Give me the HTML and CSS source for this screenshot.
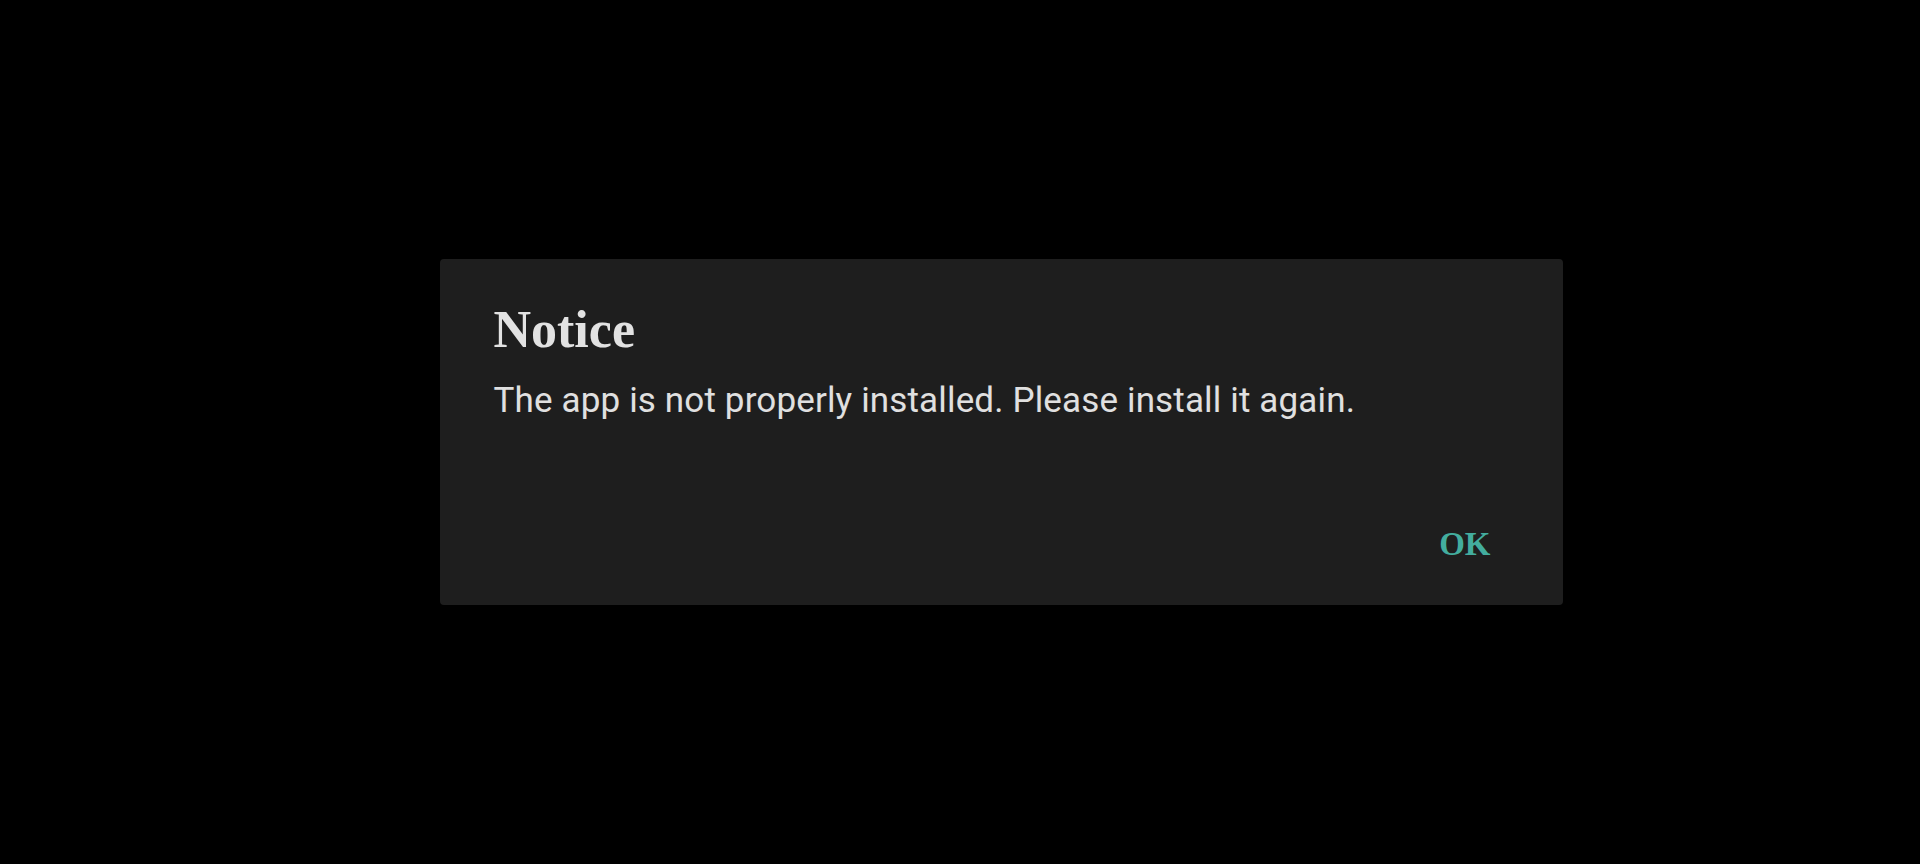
FILE: index.html
```html
<!DOCTYPE html>
<html>
<head>
<meta charset="utf-8">
<link rel="stylesheet" href="styles.css">
</head>
<body>
<div class="screen">
  <div class="dialog">
    <h1 class="title">Notice</h1>
    <p class="message">The app is not properly installed. Please install it again.</p>
    <div class="actions">
      <span class="btn">OK</span>
    </div>
  </div>
</div>
</body>
</html>
```
FILE: styles.css
```css
html, body {
  margin: 0;
  padding: 0;
  background: #000;
  height: 100%;
}
.screen {
  height: 864px;
  display: flex;
  align-items: center;
  justify-content: center;
  padding-left: 82px;
  padding-bottom: 1px;
  box-sizing: border-box;
}
.dialog {
  width: 1123px;
  box-sizing: border-box;
  background: #1e1e1e;
  border-radius: 4px;
  padding: 41px 72px 41px 54px;
  display: flex;
  flex-direction: column;
}
.title {
  margin: 0;
  font-family: "Liberation Serif", serif;
  font-weight: bold;
  font-size: 52px;
  line-height: 60px;
  color: #e2e2e2;
}
.message {
  margin: 19px 0 0;
  font-family: Roboto, sans-serif;
  font-size: 35px;
  line-height: 44px;
  letter-spacing: 0.15px;
  color: #e0e0e0;
}
.actions {
  margin-top: 101px;
  display: flex;
  justify-content: flex-end;
}
.btn {
  font-family: "Liberation Serif", serif;
  font-weight: bold;
  font-size: 33px;
  line-height: 40px;
  color: #43ad9e;
}
```
